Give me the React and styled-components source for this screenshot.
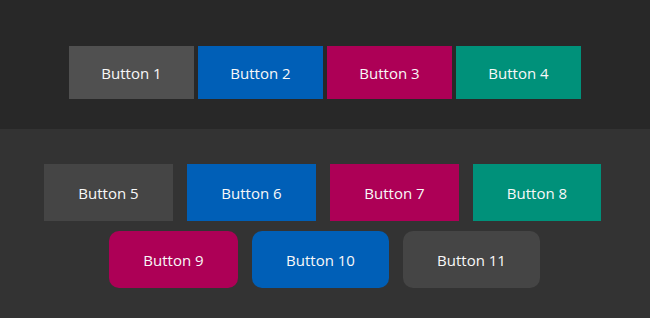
import React from "react";
import styled, { createGlobalStyle } from "styled-components";

const GlobalStyle = createGlobalStyle`
  html, body {
    margin: 0;
    padding: 0;
    background: #333333;
  }
  body {
    font-family: "Open Sans", "Noto Sans", "Liberation Sans", sans-serif;
  }
`;

const colors = {
  grey: "#505050",
  dark: "#454545",
  blue: "#005FB7",
  magenta: "#AD0056",
  teal: "#00917A",
};

const Page = styled.div`
  width: 650px;
  height: 318px;
  display: flex;
  flex-direction: column;
`;

const TopSection = styled.section`
  height: 129px;
  box-sizing: border-box;
  padding-top: 46px;
  background: #282828;
  display: flex;
  justify-content: center;
  align-items: flex-start;
`;

const BottomSection = styled.section`
  flex: 1;
  background: #333333;
  padding-top: 35px;
  display: flex;
  flex-direction: column;
  align-items: center;
  gap: 10px;
`;

const Row = styled.div`
  display: flex;
  justify-content: center;
  gap: ${(p) => p.gap}px;
  margin-left: ${(p) => p.shift || 0}px;
`;

const Button = styled.button`
  width: ${(p) => p.w}px;
  height: ${(p) => p.h}px;
  border: none;
  padding: 0;
  margin: 0;
  border-radius: ${(p) => (p.rounded ? "10px" : "0")};
  background: ${(p) => colors[p.tone]};
  color: #f8f8f8;
  font-family: inherit;
  font-size: 15px;
  cursor: pointer;
`;

const App = () => {
  return (
    <>
      <GlobalStyle />
      <Page>
        <TopSection>
          <Row gap={4}>
            <Button w={125} h={53} tone="grey">Button 1</Button>
            <Button w={125} h={53} tone="blue">Button 2</Button>
            <Button w={125} h={53} tone="magenta">Button 3</Button>
            <Button w={125} h={53} tone="teal">Button 4</Button>
          </Row>
        </TopSection>
        <BottomSection>
          <Row gap={14} shift={-5}>
            <Button w={129} h={57} tone="dark">Button 5</Button>
            <Button w={129} h={57} tone="blue">Button 6</Button>
            <Button w={129} h={57} tone="magenta">Button 7</Button>
            <Button w={128} h={57} tone="teal">Button 8</Button>
          </Row>
          <Row gap={14} shift={-1}>
            <Button w={129} h={57} tone="magenta" rounded>Button 9</Button>
            <Button w={137} h={57} tone="blue" rounded>Button 10</Button>
            <Button w={137} h={57} tone="dark" rounded>Button 11</Button>
          </Row>
        </BottomSection>
      </Page>
    </>
  );
};

export default App;
